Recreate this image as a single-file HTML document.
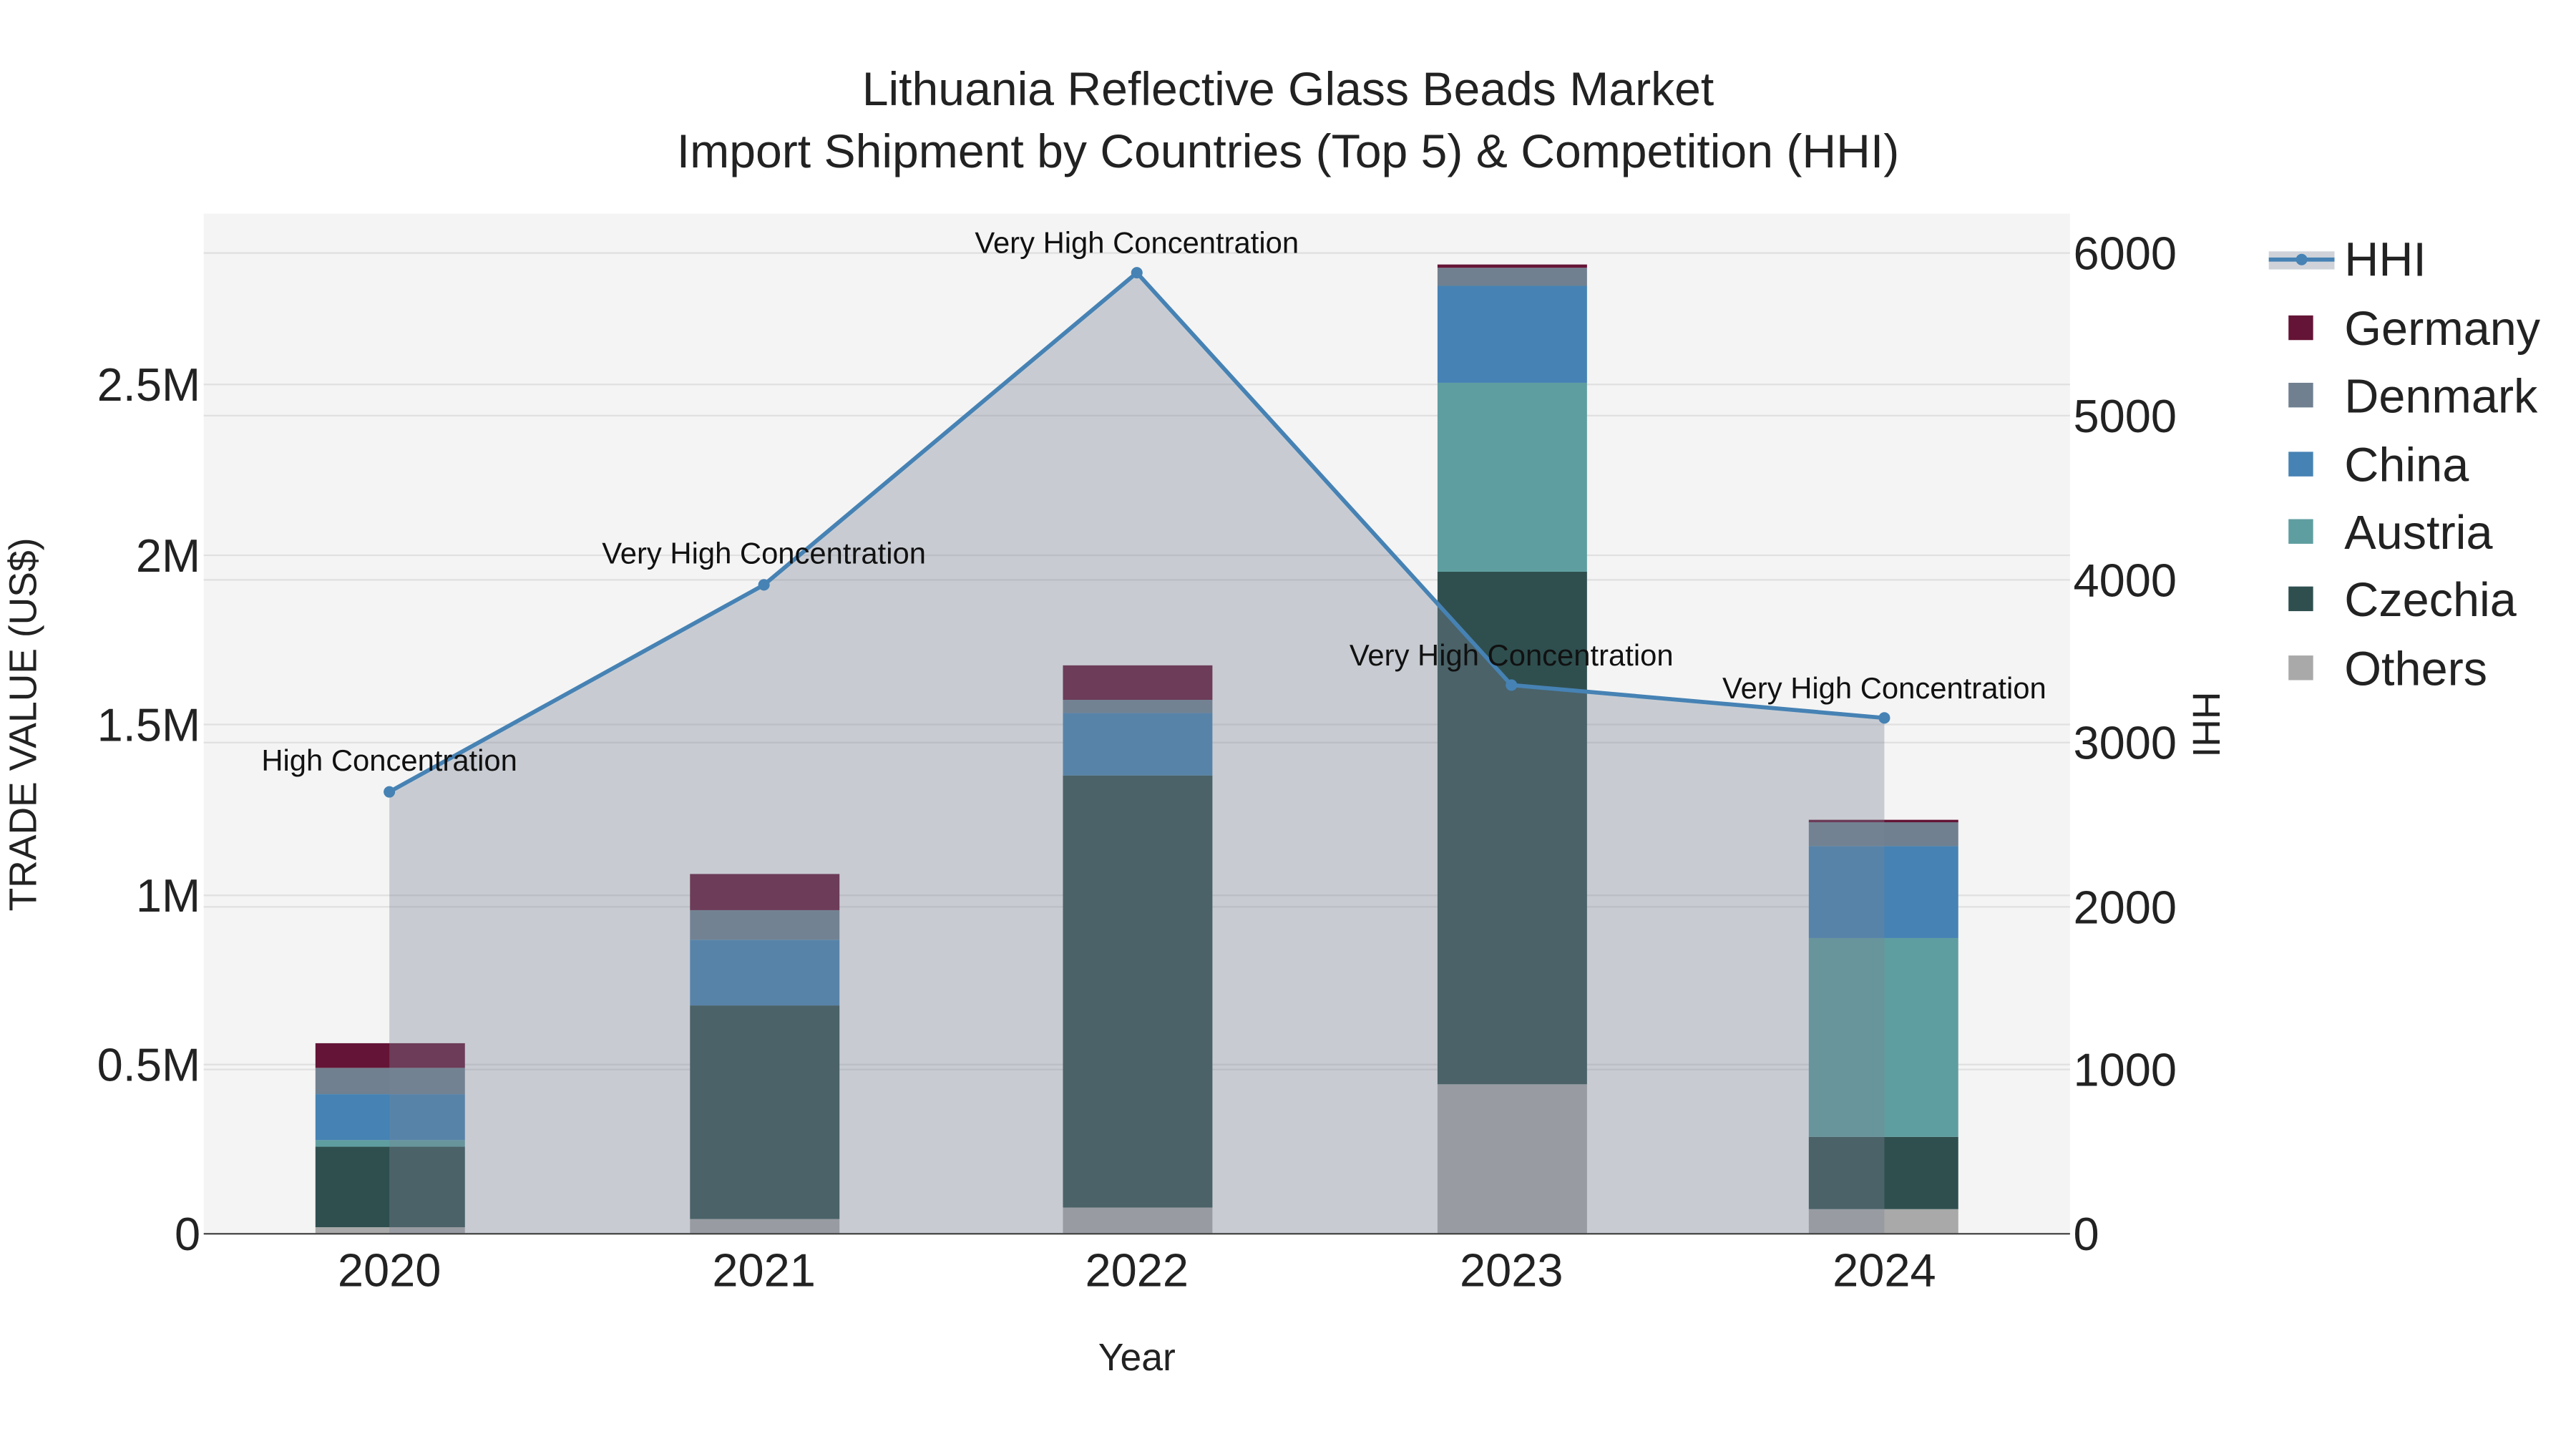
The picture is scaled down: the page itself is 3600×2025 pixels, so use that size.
<!DOCTYPE html>
<html><head><meta charset="utf-8"><style>
html,body{margin:0;padding:0;background:#fff;width:3600px;height:2025px;overflow:hidden}
svg{display:block}
text{font-family:"Liberation Sans",Arial,sans-serif}
</style></head><body>
<svg width="3600" height="2025" viewBox="0 0 1568 882" preserveAspectRatio="none" xmlns="http://www.w3.org/2000/svg">
<rect width="1568" height="882" fill="#fff"/>
<rect x="124" y="130" width="1136" height="621" fill="#f4f4f4"/>
<g stroke="#e0e0e0" stroke-width="1">
<line x1="124" x2="1260" y1="648" y2="648"/><line x1="124" x2="1260" y1="545" y2="545"/>
<line x1="124" x2="1260" y1="441" y2="441"/><line x1="124" x2="1260" y1="338" y2="338"/>
<line x1="124" x2="1260" y1="234" y2="234"/>
<line x1="124" x2="1260" y1="651" y2="651"/><line x1="124" x2="1260" y1="552" y2="552"/>
<line x1="124" x2="1260" y1="452" y2="452"/><line x1="124" x2="1260" y1="353" y2="353"/>
<line x1="124" x2="1260" y1="253" y2="253"/><line x1="124" x2="1260" y1="154" y2="154"/>
</g>
<g>
<rect x="192" y="747" width="91" height="4" fill="#a9a9a9"/>
<rect x="192" y="698" width="91" height="49" fill="#2f4f4f"/>
<rect x="192" y="694" width="91" height="4" fill="#5f9ea0"/>
<rect x="192" y="666" width="91" height="28" fill="#4682b4"/>
<rect x="192" y="650" width="91" height="16" fill="#708090"/>
<rect x="192" y="635" width="91" height="15" fill="#641436"/>

<rect x="420" y="742" width="91" height="9" fill="#a9a9a9"/>
<rect x="420" y="612" width="91" height="130" fill="#2f4f4f"/>
<rect x="420" y="572" width="91" height="40" fill="#4682b4"/>
<rect x="420" y="554" width="91" height="18" fill="#708090"/>
<rect x="420" y="532" width="91" height="22" fill="#641436"/>

<rect x="647" y="735" width="91" height="16" fill="#a9a9a9"/>
<rect x="647" y="472" width="91" height="263" fill="#2f4f4f"/>
<rect x="647" y="434" width="91" height="38" fill="#4682b4"/>
<rect x="647" y="426" width="91" height="8" fill="#708090"/>
<rect x="647" y="405" width="91" height="21" fill="#641436"/>

<rect x="875" y="660" width="91" height="91" fill="#a9a9a9"/>
<rect x="875" y="348" width="91" height="312" fill="#2f4f4f"/>
<rect x="875" y="233" width="91" height="115" fill="#5f9ea0"/>
<rect x="875" y="174" width="91" height="59" fill="#4682b4"/>
<rect x="875" y="163" width="91" height="11" fill="#708090"/>
<rect x="875" y="161" width="91" height="2" fill="#641436"/>

<rect x="1101" y="736" width="91" height="15" fill="#a9a9a9"/>
<rect x="1101" y="692" width="91" height="44" fill="#2f4f4f"/>
<rect x="1101" y="571" width="91" height="121" fill="#5f9ea0"/>
<rect x="1101" y="515" width="91" height="56" fill="#4682b4"/>
<rect x="1101" y="500" width="91" height="15" fill="#708090"/>
<rect x="1101" y="499" width="91" height="1.5" fill="#641436"/>
</g>
<polygon points="237,751 237,482 465,356 692,166 920,417 1147,437 1147,751" fill="rgb(123,132,151)" fill-opacity="0.36"/>
<polyline points="237,482 465,356 692,166 920,417 1147,437" fill="none" stroke="#4682b4" stroke-width="2.5"/>
<g fill="#4682b4"><circle cx="237" cy="482" r="3.5"/><circle cx="465" cy="356" r="3.5"/><circle cx="692" cy="166" r="3.5"/><circle cx="920" cy="417" r="3.5"/><circle cx="1147" cy="437" r="3.5"/></g>
<line x1="124" x2="1260" y1="751" y2="751" stroke="#444" stroke-width="1"/>
<g font-size="18.2" fill="#111" text-anchor="middle">
<text x="237" y="469">High Concentration</text>
<text x="465" y="343">Very High Concentration</text>
<text x="692" y="154">Very High Concentration</text>
<text x="920" y="405">Very High Concentration</text>
<text x="1147" y="425">Very High Concentration</text>
</g>
<g font-size="28.3" fill="#222" text-anchor="end">
<text x="122" y="761">0</text><text x="122" y="658">0.5M</text><text x="122" y="555">1M</text>
<text x="122" y="451">1.5M</text><text x="122" y="348">2M</text><text x="122" y="244">2.5M</text>
</g>
<g font-size="28.3" fill="#222" text-anchor="start">
<text x="1262" y="761">0</text><text x="1262" y="661">1000</text><text x="1262" y="562">2000</text>
<text x="1262" y="462">3000</text><text x="1262" y="363">4000</text><text x="1262" y="263">5000</text><text x="1262" y="164">6000</text>
</g>
<g font-size="28.3" fill="#222" text-anchor="middle">
<text x="237" y="783">2020</text><text x="465" y="783">2021</text><text x="692" y="783">2022</text><text x="920" y="783">2023</text><text x="1147" y="783">2024</text>
</g>
<text x="692" y="834" font-size="23.3" fill="#222" text-anchor="middle">Year</text>
<text transform="translate(22,441) rotate(-90)" font-size="23.3" fill="#222" text-anchor="middle">TRADE VALUE (US$)</text>
<text transform="translate(1335,441) rotate(90)" font-size="23.3" fill="#222" text-anchor="middle">HHI</text>
<g font-size="28.8" fill="#222" text-anchor="middle">
<text x="784" y="64">Lithuania Reflective Glass Beads Market</text>
<text x="784" y="102">Import Shipment by Countries (Top 5) &amp; Competition (HHI)</text>
</g>
<rect x="1381" y="153" width="40" height="11" fill="rgb(123,132,151)" fill-opacity="0.36"/>
<line x1="1381" x2="1421" y1="158" y2="158" stroke="#4682b4" stroke-width="2.5"/>
<circle cx="1401" cy="158" r="3.5" fill="#4682b4"/>
<rect x="1393" y="192" width="15" height="15" fill="#641436"/>
<rect x="1393" y="233" width="15" height="15" fill="#708090"/>
<rect x="1393" y="275" width="15" height="15" fill="#4682b4"/>
<rect x="1393" y="316" width="15" height="15" fill="#5f9ea0"/>
<rect x="1393" y="357" width="15" height="15" fill="#2f4f4f"/>
<rect x="1393" y="399" width="15" height="15" fill="#a9a9a9"/>
<g font-size="29" fill="#222">
<text x="1427" y="168">HHI</text><text x="1427" y="210">Germany</text><text x="1427" y="251">Denmark</text>
<text x="1427" y="293">China</text><text x="1427" y="334">Austria</text><text x="1427" y="375">Czechia</text><text x="1427" y="417">Others</text>
</g>
</svg>
</body></html>
